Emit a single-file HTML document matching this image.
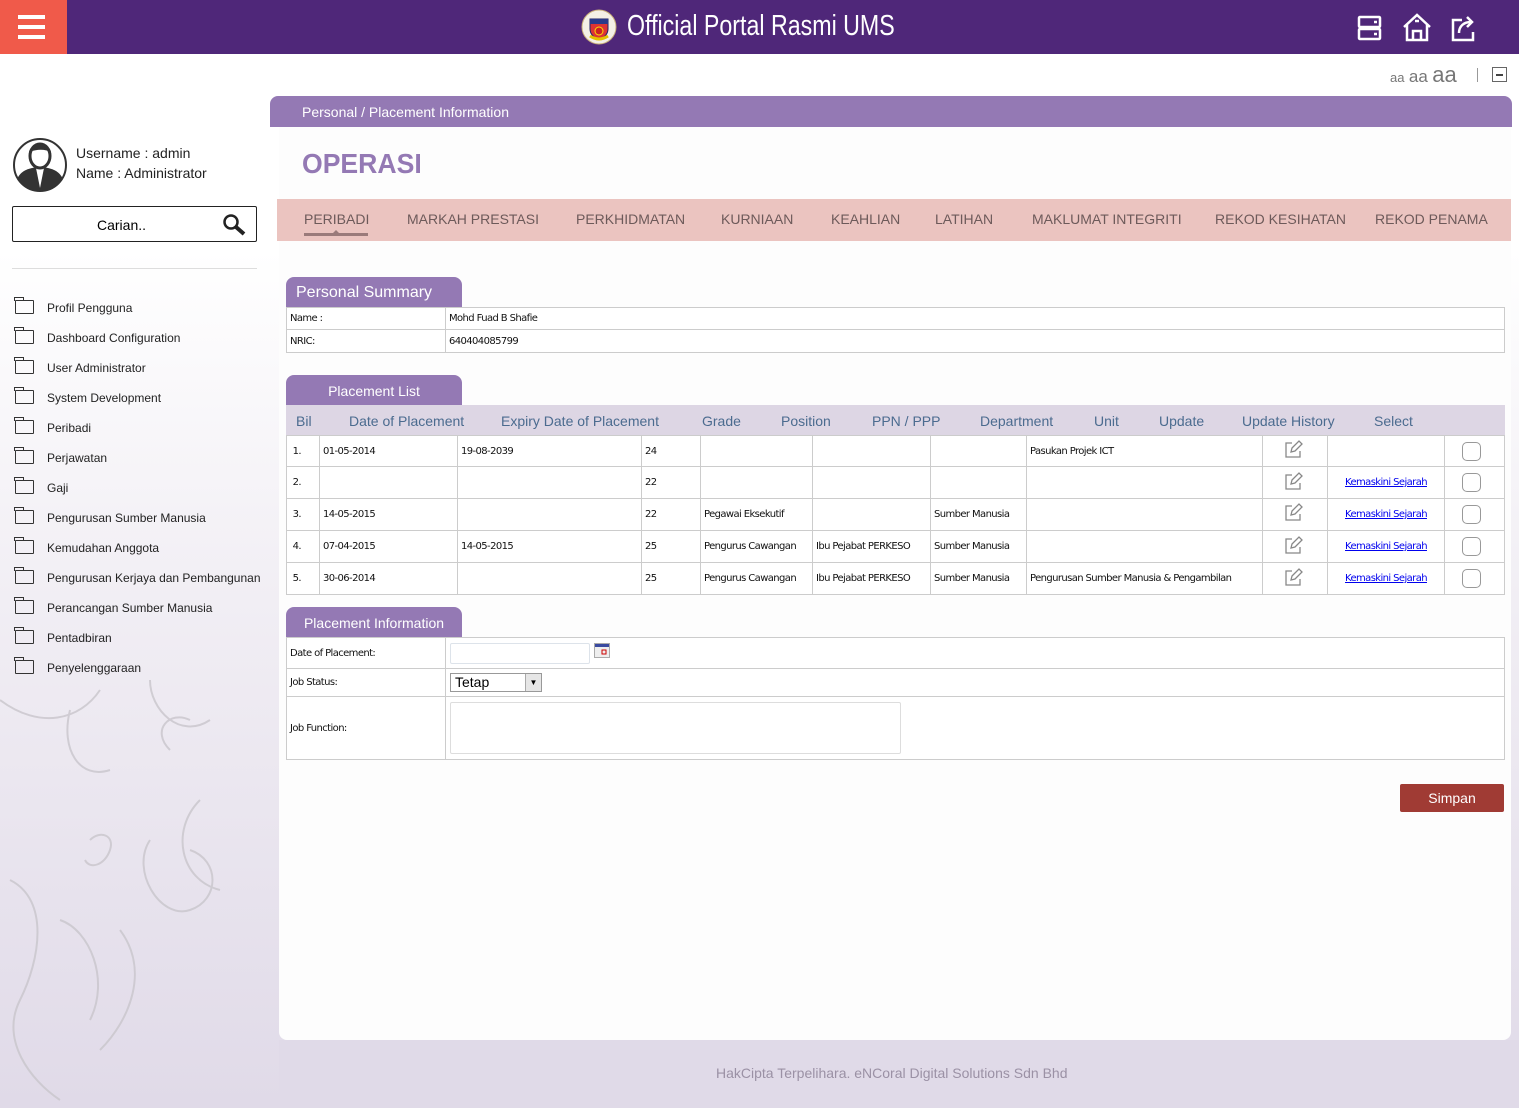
<!DOCTYPE html>
<html><head><meta charset="utf-8">
<style>
*{box-sizing:border-box;margin:0;padding:0}
body{width:1519px;height:1108px;overflow:hidden;position:relative;font-family:"Liberation Sans",sans-serif;background:linear-gradient(#fff 0px,#fff 250px,#f1eef4 600px,#e0dae8 1108px)}
.a{position:absolute}
.top{left:0;top:0;width:1519px;height:54px;background:#4f2779}
.ham{left:0;top:0;width:67px;height:54px;background:#f05a4a}
.ham i{position:absolute;left:18px;width:27px;height:4px;background:#fff}
.title{left:627px;top:10px;color:#fff;font-size:29px;font-family:"Liberation Sans",sans-serif;transform:scaleX(.8);transform-origin:left;white-space:nowrap}
.side a{position:absolute;left:47px;font-size:12px;color:#222;text-decoration:none}
.fold{position:absolute;left:15px;width:19px;height:14px;border:1.6px solid #333;border-radius:1px}
.fold:before{content:"";position:absolute;left:-1.6px;top:-4px;width:8px;height:3px;border:1.6px solid #333;border-bottom:none}
.card{left:279px;top:127px;width:1232px;height:913px;background:#fdfdfd;border-radius:0 0 8px 8px}
.crumb{left:270px;top:96px;width:1242px;height:31px;background:#9479b4;border-radius:8px 8px 0 0;color:#fff;font-size:14px;padding:8px 32px}
.tabs{left:277px;top:199px;width:1234px;height:42px;background:#ebc4c0}
.tabs span{position:absolute;top:12px;font-size:14px;color:#6d5a5a}
.ptab{position:absolute;background:#9479b4;color:#fff;border-radius:8px 8px 0 0;height:31px;width:176px;left:286px}
table{border-collapse:collapse;position:absolute;left:286px;font-family:"DejaVu Sans",sans-serif;font-size:10px;letter-spacing:-.6px;color:#111}
td{border:1px solid #ccc;padding:0 3px;background:#fff}
.hdr{left:286px;top:405px;width:1219px;height:30px;background:#ddd6e4}
.hdr span{position:absolute;top:8px;font-size:14px;color:#4b6b8f}
.lnk{color:#00e;text-decoration:underline}
.cb{display:inline-block;width:19px;height:19px;border:1px solid #999;border-radius:5px;vertical-align:middle;margin-left:-6px}
</style></head><body>
<div class="a top"></div>
<div class="a ham"><i style="top:15px"></i><i style="top:25px"></i><i style="top:35px"></i></div>
<svg class="a" style="left:581px;top:9px" width="36" height="36"><circle cx="18" cy="18" r="17" fill="#f4f0e6" stroke="#c9b07a"/><path d="M9 10h18v10c0 6-5 9-9 11-4-2-9-5-9-11z" fill="#d33" stroke="#226" stroke-width="1"/><rect x="9" y="10" width="18" height="5" fill="#2a3a8a"/><circle cx="18" cy="22" r="4" fill="#c22" stroke="#fd0"/><path d="M9 27q9 6 18 0" stroke="#e5c200" stroke-width="3" fill="none"/></svg>
<div class="a title">Official Portal Rasmi UMS</div>
<svg class="a" style="left:1356px;top:12px" width="130" height="32" fill="none" stroke="#fff" stroke-width="2.5">
<rect x="3" y="5" width="21" height="10" rx="1"/><rect x="3" y="17" width="21" height="10" rx="1"/><path d="M18 10h3M18 22h3"/>
<path d="M48 15l13-12 13 12M51 12v16h20V12M57 28v-9h8v9"/><path d="M59 9h4"/>
<path d="M106 8h-9v20h20v-8"/><path d="M103 21c0-7 5-11 12-11M111 5l5 5-5 5"/></svg>
<div class="a" style="left:1390px;top:62px;color:#777;white-space:nowrap"><span style="font-size:13px">aa</span> <span style="font-size:17px">aa</span> <span style="font-size:22px">aa</span></div>
<div class="a" style="left:1477px;top:68px;width:1px;height:14px;background:#999"></div>
<div class="a" style="left:1492px;top:67px;width:15px;height:15px;border:1px solid #666"><div style="margin:6px 3px;height:1.5px;background:#444"></div></div>

<svg class="a" style="left:12px;top:137px" width="56" height="56"><circle cx="28" cy="28" r="26" fill="#fff" stroke="#333" stroke-width="2"/><path d="M5 42c4-8 10-11 23-12 13 1 19 4 23 12-5 8-13 12-23 12S10 50 5 42z" fill="#333"/><path d="M24 31l4 20 4-20z" fill="#fff"/><ellipse cx="28" cy="19" rx="10" ry="12" fill="#fff" stroke="#333" stroke-width="3"/><path d="M17 15c2-10 20-10 22 0-6-3-14-3-22 0z" fill="#333"/></svg>
<div class="a" style="left:76px;top:143px;font-size:14px;color:#222;line-height:20px">Username : admin<br>Name : Administrator</div>
<div class="a" style="left:12px;top:206px;width:245px;height:36px;border:1.5px solid #222;border-radius:2px;font-size:14px;padding:10px 0 0 84px">Carian..</div>
<svg class="a" style="left:222px;top:213px" width="26" height="24" fill="none" stroke="#222" stroke-width="2.5"><circle cx="9" cy="9" r="6.5"/><path d="M14 14l8 7" stroke-width="4"/></svg>
<div class="a" style="left:12px;top:268px;width:245px;height:1px;background:#ddd"></div>
<div class="side">
<i class="fold" style="top:300px"></i><a style="top:301px">Profil Pengguna</a>
<i class="fold" style="top:330px"></i><a style="top:331px">Dashboard Configuration</a>
<i class="fold" style="top:360px"></i><a style="top:361px">User Administrator</a>
<i class="fold" style="top:390px"></i><a style="top:391px">System Development</a>
<i class="fold" style="top:420px"></i><a style="top:421px">Peribadi</a>
<i class="fold" style="top:450px"></i><a style="top:451px">Perjawatan</a>
<i class="fold" style="top:480px"></i><a style="top:481px">Gaji</a>
<i class="fold" style="top:510px"></i><a style="top:511px">Pengurusan Sumber Manusia</a>
<i class="fold" style="top:540px"></i><a style="top:541px">Kemudahan Anggota</a>
<i class="fold" style="top:570px"></i><a style="top:571px">Pengurusan Kerjaya dan Pembangunan</a>
<i class="fold" style="top:600px"></i><a style="top:601px">Perancangan Sumber Manusia</a>
<i class="fold" style="top:630px"></i><a style="top:631px">Pentadbiran</a>
<i class="fold" style="top:660px"></i><a style="top:661px">Penyelenggaraan</a>
</div>
<svg class="a" style="left:0;top:680px" width="279" height="428" fill="none" stroke="#c9c6cc" stroke-width="2" opacity=".8">
<path d="M0 20c40 30 80 20 100-10M70 30c-10 40 10 70 40 60M150 0c0 30 30 60 60 40M190 40c-20-10-40 10-20 30"/>
<path d="M10 200c40 20 30 80 10 120s10 80 40 100M60 240c30 10 50 60 30 100M150 160c-20 30 10 80 40 70s30-50 0-60M120 250c30 40 10 90-20 120M200 120c-30 30-20 80 20 90"/>
<path d="M90 160c10-10 25-5 20 10s-20 20-25 10"/></svg>

<div class="a card"></div>
<div class="a crumb">Personal / Placement Information</div>
<div class="a" style="left:302px;top:148px;font-size:28px;font-weight:bold;color:#9479b4;transform:scaleX(.95);transform-origin:left">OPERASI</div>
<div class="a tabs">
<span style="left:27px">PERIBADI</span><span style="left:130px">MARKAH PRESTASI</span><span style="left:299px">PERKHIDMATAN</span><span style="left:444px">KURNIAAN</span><span style="left:554px">KEAHLIAN</span><span style="left:658px">LATIHAN</span><span style="left:755px">MAKLUMAT INTEGRITI</span><span style="left:938px">REKOD KESIHATAN</span><span style="left:1098px">REKOD PENAMA</span>
<div style="position:absolute;left:27px;top:34px;width:64px;height:3px;background:#9a7a7a"></div>
<div style="position:absolute;left:56px;top:31px;border:3px solid transparent;border-bottom-color:#9a7a7a;border-top:none"></div>
</div>

<div class="ptab" style="top:277px;font-size:16px;padding:7px 10px">Personal Summary</div>
<table style="top:307px;width:1219px">
<tr style="height:22px"><td style="width:159px">Name :</td><td>Mohd Fuad B Shafie</td></tr>
<tr style="height:23px"><td>NRIC:</td><td>640404085799</td></tr></table>

<div class="ptab" style="top:375px;font-size:14px;padding:8px 0;text-align:center">Placement List</div>
<div class="a hdr"><span style="left:10px">Bil</span><span style="left:63px">Date of Placement</span><span style="left:215px">Expiry Date of Placement</span><span style="left:416px">Grade</span><span style="left:495px">Position</span><span style="left:586px">PPN / PPP</span><span style="left:694px">Department</span><span style="left:808px">Unit</span><span style="left:873px">Update</span><span style="left:956px">Update History</span><span style="left:1088px">Select</span></div>
<table style="top:435px;width:1219px">
<colgroup><col style="width:33px"><col style="width:138px"><col style="width:184px"><col style="width:59px"><col style="width:112px"><col style="width:118px"><col style="width:96px"><col style="width:236px"><col style="width:65px"><col style="width:117px"><col></colgroup>
<tr style="height:31px"><td>&nbsp;1.</td><td>01-05-2014</td><td>19-08-2039</td><td>24</td><td></td><td></td><td></td><td>Pasukan Projek ICT</td><td></td><td></td><td style="text-align:center"><span class="cb"></span></td></tr>
<tr style="height:32px"><td>&nbsp;2.</td><td></td><td></td><td>22</td><td></td><td></td><td></td><td></td><td></td><td style="text-align:center"><span class="lnk">Kemaskini Sejarah</span></td><td style="text-align:center"><span class="cb"></span></td></tr>
<tr style="height:32px"><td>&nbsp;3.</td><td>14-05-2015</td><td></td><td>22</td><td>Pegawai Eksekutif</td><td></td><td>Sumber Manusia</td><td></td><td></td><td style="text-align:center"><span class="lnk">Kemaskini Sejarah</span></td><td style="text-align:center"><span class="cb"></span></td></tr>
<tr style="height:32px"><td>&nbsp;4.</td><td>07-04-2015</td><td>14-05-2015</td><td>25</td><td>Pengurus Cawangan</td><td>Ibu Pejabat PERKESO</td><td>Sumber Manusia</td><td></td><td></td><td style="text-align:center"><span class="lnk">Kemaskini Sejarah</span></td><td style="text-align:center"><span class="cb"></span></td></tr>
<tr style="height:32px"><td>&nbsp;5.</td><td>30-06-2014</td><td></td><td>25</td><td>Pengurus Cawangan</td><td>Ibu Pejabat PERKESO</td><td>Sumber Manusia</td><td>Pengurusan Sumber Manusia &amp; Pengambilan</td><td></td><td style="text-align:center"><span class="lnk">Kemaskini Sejarah</span></td><td style="text-align:center"><span class="cb"></span></td></tr>
</table>
<svg class="a" style="left:1285px;top:440px" width="18" height="150" fill="none" stroke="#888" stroke-width="1.3">
<g id="e"><path d="M7 3H1v14h14v-6"/><path d="M6 12l1-4 7-7 3 3-7 7z"/></g>
<use href="#e" y="32"/><use href="#e" y="63"/><use href="#e" y="96"/><use href="#e" y="128"/></svg>

<div class="ptab" style="top:607px;font-size:14px;padding:8px 0;text-align:center">Placement Information</div>
<table style="top:637px;width:1219px">
<tr style="height:31px"><td style="width:159px">Date of Placement:</td><td></td></tr>
<tr style="height:28px"><td>Job Status:</td><td></td></tr>
<tr style="height:63px"><td>Job Function:</td><td></td></tr></table>
<div class="a" style="left:450px;top:643px;width:140px;height:21px;border:1px solid #dde3ea;border-radius:2px;background:#fff"></div>
<svg class="a" style="left:594px;top:643px" width="16" height="15"><rect x=".5" y=".5" width="15" height="14" fill="#eee" stroke="#aaa"/><rect x="1" y="1" width="14" height="3" fill="#3a4aa0"/><rect x="8" y="7" width="4" height="4" fill="none" stroke="#c00"/></svg>
<div class="a" style="left:450px;top:673px;width:92px;height:19px;border:1px solid #999;background:#fff;font-size:14px;padding:0 4px">Tetap<span style="position:absolute;right:0;top:0;width:16px;height:17px;background:#e6e6e6;border-left:1px solid #aaa;font-size:8px;text-align:center;line-height:17px">▼</span></div>
<div class="a" style="left:450px;top:702px;width:451px;height:52px;border:1px solid #ddd;border-radius:2px;background:#fff"></div>
<div class="a" style="left:1400px;top:784px;width:104px;height:28px;background:#a03b34;border-radius:2px;color:#fff;font-size:14px;text-align:center;line-height:28px">Simpan</div>
<div class="a" style="left:279px;top:1040px;width:1240px;height:68px;background:#e0dae8"></div>
<div class="a" style="left:716px;top:1065px;font-size:14px;color:#9b91a5">HakCipta Terpelihara. eNCoral Digital Solutions Sdn Bhd</div>
</body></html>
